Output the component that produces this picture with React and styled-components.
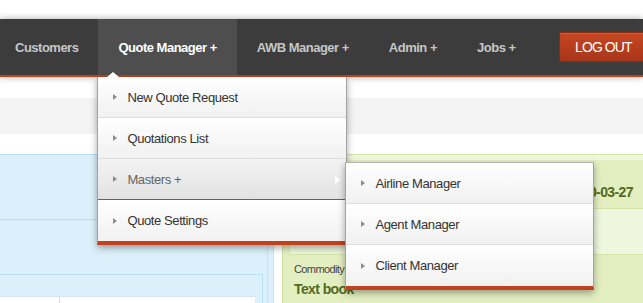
import React from 'react';
import styled, { createGlobalStyle } from 'styled-components';

const GlobalStyle = createGlobalStyle`
    body {
        margin:0;
        font-family:"Liberation Sans", Arial, sans-serif;
        background:#fff;
    }
`;

const RED = '#c1401d';

/* Page */
const Page = styled.div`
    width:643px;
    height:303px;
    overflow:hidden;
    position:relative;
`;
const TopGap = styled.div`
    height:19px;
    background:#fff;
`;

/* Navigation */
const NavBar = styled.nav`
    position:relative;
    z-index:5;
    display:flex;
    align-items:center;
    height:56px;
    background:#3c3c3c;
    border-bottom:2px solid ${RED};
    box-shadow:0 0 7px rgba(0,0,0,.35);
`;
const NavList = styled.ul`
    display:flex;
    align-self:stretch;
    list-style:none;
    margin:0 0 0 -5px;
    padding:0;
`;
const NavItem = styled.li`
    position:relative;
    display:flex;
    align-items:center;
    padding:0 20px;
    font-size:13px;
    font-weight:bold;
    letter-spacing:-.5px;
    color:${p => p.active ? '#fff' : '#c6c6c6'};
    background:${p => p.active ? '#4e4e4e' : 'transparent'};
    white-space:nowrap;
`;
const LogOut = styled.button`
    margin-left:auto;
    margin-right:-4px;
    width:88px;
    height:30px;
    padding:0 0 0 15px;
    text-align:left;
    border:1px solid #8a2b12;
    border-radius:2px;
    background:linear-gradient(#c74622, #a8361a);
    color:#fff;
    font-family:"Liberation Sans", Arial, sans-serif;
    font-size:14px;
    letter-spacing:-.9px;
    box-shadow:inset 0 1px 0 rgba(255,255,255,.15);
`;

/* Dropdown menus */
const Dropdown = styled.ul`
    position:absolute;
    top:calc(100% + 2px);
    left:-1px;
    width:250px;
    box-sizing:border-box;
    margin:0;
    padding:0;
    list-style:none;
    background:#fff;
    border-left:1px solid #a3a3a3;
    border-right:1px solid #a3a3a3;
    border-bottom:4px solid ${RED};
    box-shadow:0 3px 7px rgba(0,0,0,.35);
    letter-spacing:normal;
`;
const SubMenu = styled(Dropdown)`
    top:3px;
    left:calc(100% - 1px);
    width:249px;
    border-top:1px solid #b5b5b5;
    z-index:2;
`;
const Pointer = styled.span`
    position:absolute;
    top:-5px;
    left:9px;
    width:0;
    height:0;
    border-left:6px solid transparent;
    border-right:6px solid transparent;
    border-bottom:5px solid #fff;
`;
const MenuItem = styled.li`
    position:relative;
    display:flex;
    align-items:center;
    height:40px;
    padding-left:15px;
    font-size:13px;
    font-weight:normal;
    letter-spacing:-.4px;
    color:${p => p.hover ? '#666' : '#333'};
    background:${p => p.hover
        ? 'linear-gradient(#f3f3f3, #e2e2e2)'
        : 'linear-gradient(#fff, #f1f1f1)'};
    border-bottom:1px solid ${p => p.hover ? RED : '#dedede'};
    &:last-child { border-bottom:none; height:41px; }
`;
const Bullet = styled.span`
    width:0;
    height:0;
    margin-right:10px;
    border-left:4px solid #8c8c8c;
    border-top:3px solid transparent;
    border-bottom:3px solid transparent;
`;
const SideArrow = styled.span`
    position:absolute;
    right:6px;
    top:17px;
    width:0;
    height:0;
    border-left:5px solid #fff;
    border-top:4px solid transparent;
    border-bottom:4px solid transparent;
`;

/* Content */
const Band = styled.div`
    height:${p => p.h}px;
    background:${p => p.bg};
`;
const MainRow = styled.div`
    display:flex;
    gap:8px;
    height:150px;
`;
const BluePanel = styled.section`
    width:273px;
    flex:none;
    background:#dcf0fb;
    border-top:1px solid #b7def5;
    border-right:1px solid #c2e4f7;
`;
const BlueInner = styled.div`
    width:267px;
    height:100%;
    border-right:1px solid #c2e4f7;
`;
const BlueRow = styled.div`
    height:${p => p.h}px;
    border-bottom:${p => p.line ? '1px solid #b7def5' : 'none'};
`;
const BlueBox = styled.div`
    width:262px;
    border-top:1px solid #b7def5;
    border-right:1px solid #b7def5;
    padding-top:21px;
    height:40px;
`;
const WhiteTable = styled.div`
    display:grid;
    grid-template-columns:60px 1fr;
    width:255px;
    height:20px;
    background:#fff;
    border-top:1px solid #d7e6ee;
`;
const Cell = styled.div`
    border-right:1px solid #dadada;
`;

const GreenPanel = styled.section`
    flex:1;
    background:#e3efc1;
    border-left:1px solid #cfe2a0;
    border-top:1px solid #d3e6a8;
`;
const GreenRow = styled.div`
    display:flex;
    height:${p => p.h}px;
    background:${p => p.light ? '#eef6dd' : '#e3efc1'};
    border-bottom:${p => p.line ? '1px solid #d3e6a8' : 'none'};
    ${p => p.inset ? 'margin-left:6px; border-left:1px solid #d9eab3;' : ''}
`;
const Field = styled.div`
    display:flex;
    flex-direction:column;
    gap:6px;
    padding:${p => p.pad};
    margin-left:${p => p.right ? 'auto' : '0'};
`;
const Label = styled.span`
    font-size:11px;
    letter-spacing:-.6px;
    color:#444;
`;
const Value = styled.span`
    font-size:14px;
    font-weight:bold;
    letter-spacing:-.6px;
    color:#546a1c;
`;

const Item = ({ children, hover }) => (
    <MenuItem hover={hover}>
        <Bullet />
        {children}
    </MenuItem>
);

export default function App() {
    return (
        <Page>
            <GlobalStyle />
            <TopGap />
            <NavBar>
                <NavList>
                    <NavItem>Customers</NavItem>
                    <NavItem active>
                        Quote Manager +
                        <Dropdown>
                            <Pointer />
                            <Item>New Quote Request</Item>
                            <Item>Quotations List</Item>
                            <MenuItem hover>
                                <Bullet />
                                Masters +
                                <SideArrow />
                                <SubMenu>
                                    <Item>Airline Manager</Item>
                                    <Item>Agent Manager</Item>
                                    <Item>Client Manager</Item>
                                </SubMenu>
                            </MenuItem>
                            <Item>Quote Settings</Item>
                        </Dropdown>
                    </NavItem>
                    <NavItem>AWB Manager +</NavItem>
                    <NavItem>Admin +</NavItem>
                    <NavItem>Jobs +</NavItem>
                </NavList>
                <LogOut>LOG OUT</LogOut>
            </NavBar>

            <Band h={21} bg="#fff" />
            <Band h={36} bg="#f3f3f3" />
            <Band h={20} bg="#fff" />

            <MainRow>
                <BluePanel>
                    <BlueInner>
                        <BlueRow h={64} line />
                        <BlueRow h={54} />
                        <BlueBox>
                            <WhiteTable>
                                <Cell />
                                <div />
                            </WhiteTable>
                        </BlueBox>
                    </BlueInner>
                </BluePanel>
                <GreenPanel>
                    <GreenRow h={5} light />
                    <GreenRow h={48} line>
                        <Field right pad="24px 10px 0 6px">
                            <Value>2020-03-27</Value>
                        </Field>
                    </GreenRow>
                    <GreenRow h={45} light line inset />
                    <GreenRow h={60}>
                        <Field pad="8px 0 0 11px">
                            <Label>Commodity</Label>
                            <Value>Text book</Value>
                        </Field>
                    </GreenRow>
                </GreenPanel>
            </MainRow>
        </Page>
    );
}
